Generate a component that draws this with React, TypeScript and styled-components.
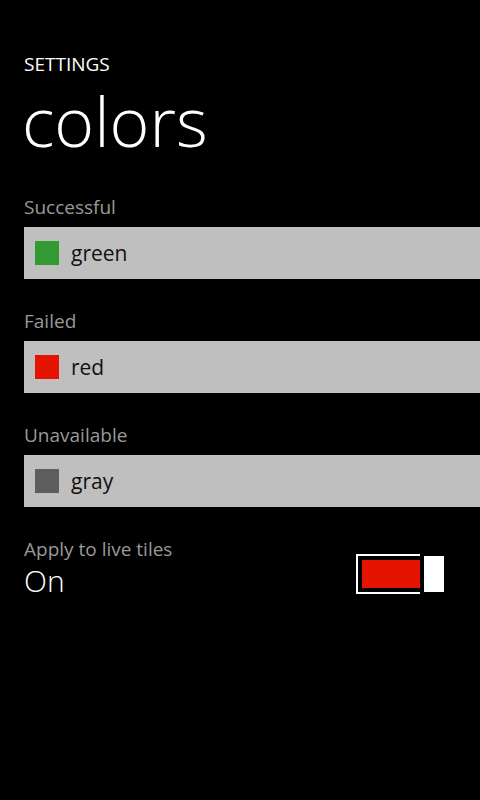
import * as React from 'react';
import styled, { createGlobalStyle } from 'styled-components';

const GlobalStyle = createGlobalStyle`
  html, body {
    margin: 0;
    padding: 0;
    background: #000;
  }
  body {
    font-family: "Open Sans", "Noto Sans", sans-serif;
    color: #fff;
  }
`;

const Page = styled.div`
  width: 480px;
  min-height: 800px;
  padding: 52px 0 0 24px;
  box-sizing: border-box;
  overflow: hidden;
`;

const AppTitle = styled.div`
  font-size: 19px;
  line-height: 24px;
  text-transform: uppercase;
`;

const PageTitle = styled.h1`
  margin: 11px 0 0 -2px;
  font-size: 68px;
  line-height: 68px;
  font-weight: 300;
`;

const Group = styled.div`
  margin-top: ${p => (p.first ? 39 : 29)}px;
`;

const Label = styled.div`
  font-size: 19px;
  line-height: 26px;
  color: #999;
`;

const Picker = styled.div`
  margin-top: 7px;
  height: 52px;
  background: #bfbfbf;
  display: flex;
  align-items: center;
  gap: 12px;
  padding-left: 11px;
`;

const Swatch = styled.span`
  width: 24px;
  height: 24px;
  background: ${p => p.color};
`;

const PickerText = styled.span`
  font-size: 21px;
  color: #111;
`;

const ToggleRow = styled.div`
  margin-top: 29px;
  padding-right: 36px;
  display: flex;
  justify-content: space-between;
  align-items: flex-end;
`;

const StateText = styled.div`
  margin-top: 1px;
  font-size: 30px;
  line-height: 36px;
  font-weight: 300;
`;

const Switch = styled.div`
  display: flex;
  align-items: center;
  margin-bottom: 5px;
`;

const Track = styled.div`
  width: 58px;
  height: 28px;
  padding: 4px 0 4px 4px;
  border: 2px solid #fff;
  border-right: none;
  display: flex;
`;

const Fill = styled.div`
  flex: 1;
  background: #e51400;
`;

const Thumb = styled.div`
  width: 20px;
  height: 36px;
  margin-left: 4px;
  background: #fff;
`;

const colors = [
  { label: 'Successful', name: 'green', value: '#339933' },
  { label: 'Failed', name: 'red', value: '#e51400' },
  { label: 'Unavailable', name: 'gray', value: '#5c5f5c' },
];

const App: React.FC = () => {
  return <>
    <GlobalStyle />
    <Page>
      <AppTitle>Settings</AppTitle>
      <PageTitle>colors</PageTitle>
      {colors.map((c, i) => (
        <Group key={c.name} first={i === 0}>
          <Label>{c.label}</Label>
          <Picker>
            <Swatch color={c.value} />
            <PickerText>{c.name}</PickerText>
          </Picker>
        </Group>
      ))}
      <ToggleRow>
        <div>
          <Label>Apply to live tiles</Label>
          <StateText>On</StateText>
        </div>
        <Switch>
          <Track><Fill /></Track>
          <Thumb />
        </Switch>
      </ToggleRow>
    </Page>
  </>;
};

export default App;
